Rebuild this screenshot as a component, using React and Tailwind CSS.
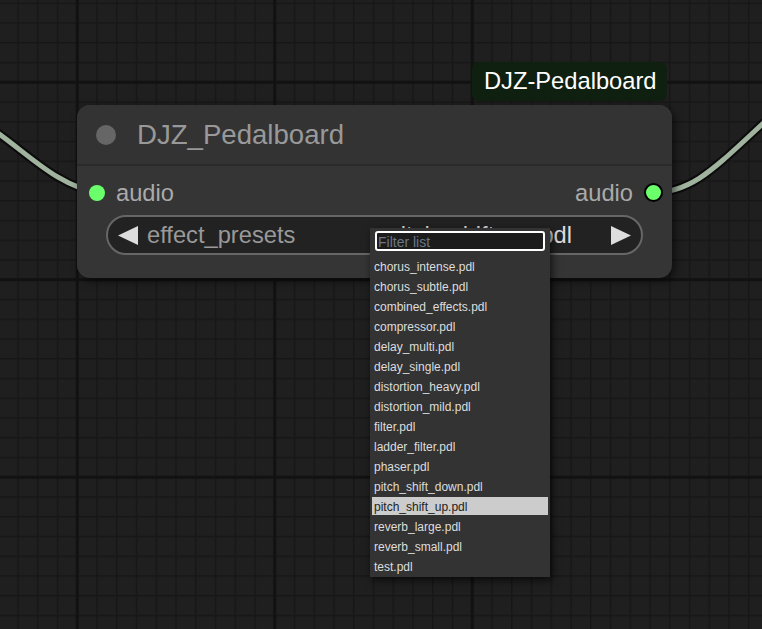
import React from "react";

const presets = [
  "chorus_intense.pdl",
  "chorus_subtle.pdl",
  "combined_effects.pdl",
  "compressor.pdl",
  "delay_multi.pdl",
  "delay_single.pdl",
  "distortion_heavy.pdl",
  "distortion_mild.pdl",
  "filter.pdl",
  "ladder_filter.pdl",
  "phaser.pdl",
  "pitch_shift_down.pdl",
  "pitch_shift_up.pdl",
  "reverb_large.pdl",
  "reverb_small.pdl",
  "test.pdl",
];

const selected = "pitch_shift_up.pdl";

// canvas grid + links, drawn like the graph canvas does
function CanvasBackdrop() {
  const majors = [75.75, 273.25, 470.75];
  const majorsY = [80.75, 278.25, 475.75];
  return (
    <svg className="absolute inset-0" width="762" height="629">
      <defs>
        <pattern id="grid" width="19.75" height="19.75" x="17.25" y="2.5" patternUnits="userSpaceOnUse">
          <rect width="19.75" height="19.75" fill="#1f1f1f" />
          <rect width="1.5" height="19.75" fill="#171717" />
          <rect width="19.75" height="1.5" fill="#171717" />
        </pattern>
      </defs>
      <rect width="762" height="629" fill="url(#grid)" />
      {majors.map((x) => (
        <rect key={x} x={x} y="0" width="3" height="629" fill="#121212" />
      ))}
      {majorsY.map((y) => (
        <rect key={y} x="0" y={y} width="762" height="3" fill="#121212" />
      ))}
      <g fill="none" strokeLinecap="round">
        <path d="M -40 112 C 10 130, 45 185, 100 193" stroke="#0b0b0b" strokeWidth="9" />
        <path d="M -40 112 C 10 130, 45 185, 100 193" stroke="#a0b39e" strokeWidth="5" />
        <path d="M 650 193 C 700 193, 720 160, 800 90" stroke="#0b0b0b" strokeWidth="9" />
        <path d="M 650 193 C 700 193, 720 160, 800 90" stroke="#a0b39e" strokeWidth="5" />
      </g>
    </svg>
  );
}

function Arrow({ dir }) {
  return (
    <svg width="20" height="19" viewBox="0 0 20 19" className="shrink-0">
      {dir === "left" ? (
        <polygon points="0,9.5 20,0 20,19" fill="#dddddd" />
      ) : (
        <polygon points="20,9.5 0,0 0,19" fill="#dddddd" />
      )}
    </svg>
  );
}

function PedalboardNode() {
  return (
    <div className="absolute left-[77px] top-[105px] w-[595px] h-[173px] rounded-[13px] bg-[#353535] shadow-[3px_3px_8px_rgba(0,0,0,0.55)]">
      {/* title */}
      <div className="h-[61px] flex items-center pl-[19px] gap-[21px] bg-[#333333] rounded-t-[13px] border-b-2 border-[#2b2b2b]">
        <div className="w-[20px] h-[20px] rounded-full bg-[#666666]" />
        <span className="text-[27.6px] leading-none text-[#999999]">DJZ_Pedalboard</span>
      </div>

      {/* slots */}
      <div className="mt-[7px] h-[40px] flex items-center justify-between pl-[12px] pr-[9px]">
        <div className="flex items-center gap-[11px]">
          <div className="w-[16px] h-[16px] rounded-full bg-[#6bff6b]" />
          <span className="text-[23.7px] leading-none text-[#aaaaaa] pt-[2px]">audio</span>
        </div>
        <div className="flex items-center gap-[11px]">
          <span className="text-[23.7px] leading-none text-[#aaaaaa] pt-[2px]">audio</span>
          <div className="w-[19px] h-[19px] rounded-full bg-[#6bff6b] border-2 border-black" />
        </div>
      </div>

      {/* combo widget */}
      <div className="mt-[2px] mx-[29px] h-[40px] rounded-full border-2 border-[#666666] bg-[#222222] flex items-center pl-[10px] pr-[10px]">
        <Arrow dir="left" />
        <span className="ml-[9px] pt-[2px] text-[23.7px] leading-none text-[#999999]">effect_presets</span>
        <span className="ml-auto pt-[2px] text-[23.7px] leading-none text-[#dddddd]">pitch_shift_up.pdl</span>
        <span className="w-[39px]" />
        <Arrow dir="right" />
      </div>
    </div>
  );
}

function ComboMenu() {
  return (
    <div className="absolute left-[370px] top-[228px] w-[180px] h-[349px] bg-[#333333] shadow-[2px_3px_8px_rgba(0,0,0,0.7)] flex flex-col">
      <div className="mt-[3px] mx-[5px] h-[20px] rounded-[3px] border-2 border-white bg-[#1c1c1c] flex items-center pl-[1px]">
        <span className="text-[14px] leading-none text-[#6b7785] pt-[1px]">Filter list</span>
      </div>
      <div className="mt-[5px] flex flex-col">
        {presets.map((p) => (
          <div
            key={p}
            className={
              p === selected
                ? "h-[18px] my-[1px] mx-[2px] pl-[2px] pt-[2px] flex items-center bg-[#cccccc] text-[#222222] text-[12px] leading-none"
                : "h-[18px] my-[1px] mx-[2px] pl-[2px] pt-[2px] flex items-center text-[#dddddd] text-[12px] leading-none"
            }
          >
            {p}
          </div>
        ))}
      </div>
    </div>
  );
}

export default function App() {
  return (
    <div className="relative w-[762px] h-[629px] overflow-hidden bg-[#1f1f1f] font-['Liberation_Sans',Arial,sans-serif]">
      <CanvasBackdrop />

      {/* node badge */}
      <div className="absolute left-[472px] top-[62px] w-[195px] h-[39px] rounded-[7px] bg-[#0f1f10] flex items-center pl-[12px]">
        <span className="text-[23.7px] leading-none text-white">DJZ-Pedalboard</span>
      </div>

      <PedalboardNode />
      <ComboMenu />
    </div>
  );
}
